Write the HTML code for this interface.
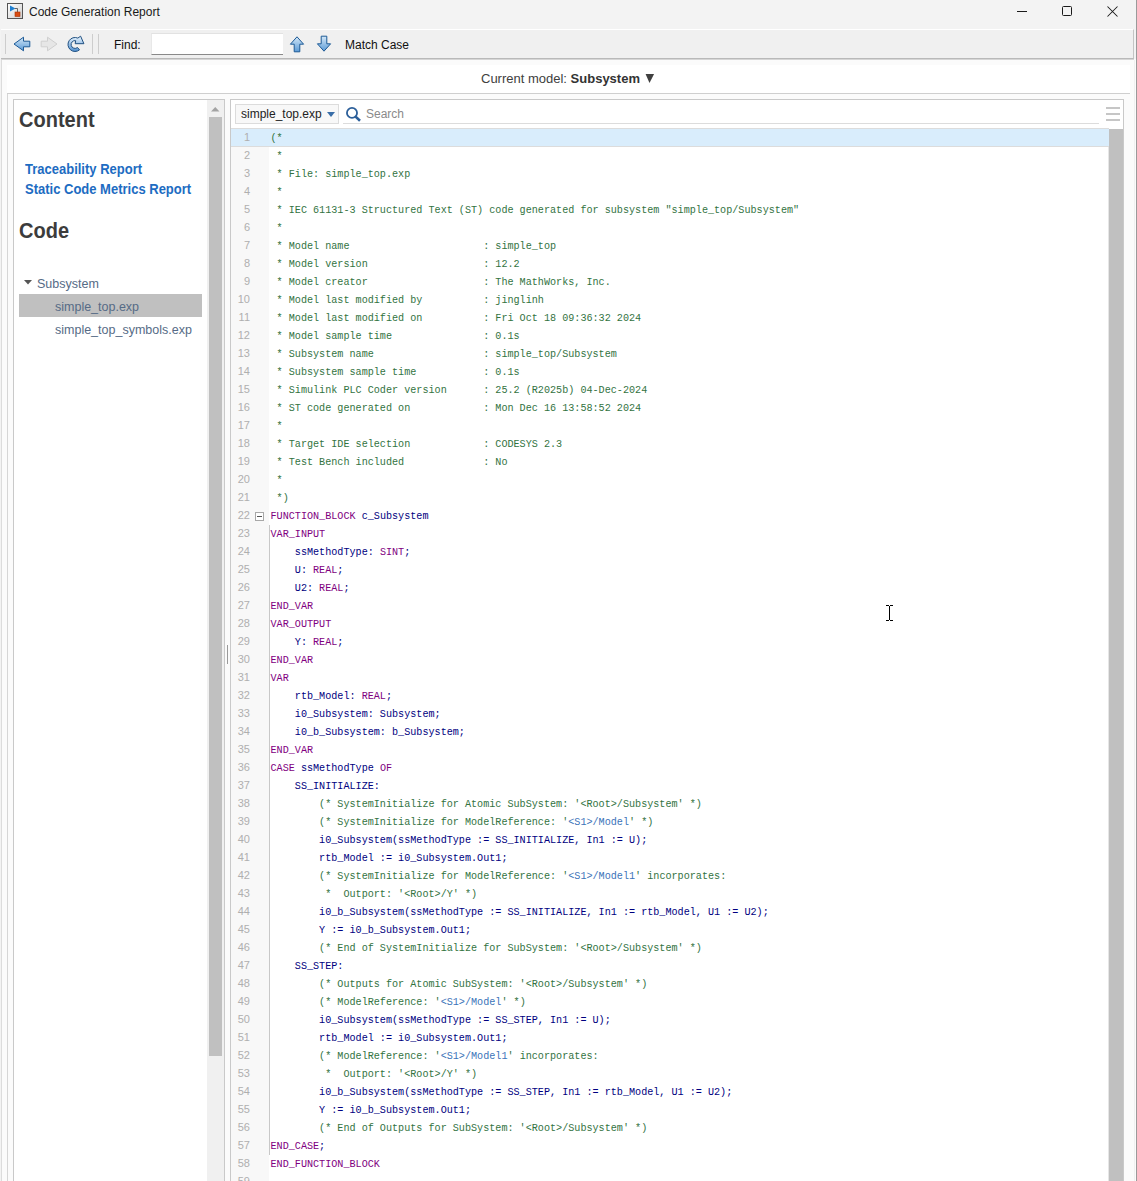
<!DOCTYPE html>
<html><head><meta charset="utf-8">
<style>
*{margin:0;padding:0;box-sizing:border-box}
html,body{width:1137px;height:1181px;overflow:hidden;background:#f3f3f3;font-family:"Liberation Sans",sans-serif}
.a{position:absolute}
svg{position:absolute;overflow:visible}
.t{position:absolute;white-space:pre;line-height:16px;height:16px}
#tb{left:1px;top:29px;width:1133px;height:30px;background:#f0f0f0;border-top:1px solid #fff;border-bottom:1px solid #b9b9b9;border-right:1px solid #c4c4c4}
#main{left:1px;top:59px;width:1135px;height:1122px;background:#fbfbfb;border-left:1px solid #dcdcdc}
#hdr{left:7px;top:65px;width:1123px;height:29px;background:#fff;border-bottom:1px solid #cfcfcf}
#lp{left:13px;top:99px;width:212px;height:1100px;background:#fff;border:1px solid #c9c9c9}
#rp{left:230px;top:99px;width:894px;height:1100px;background:#fff;border:1px solid #c9c9c9}
.ln{position:absolute;left:231px;width:877px;height:18px}
.no{position:absolute;left:0;width:19px;text-align:right;font-family:"Liberation Sans",sans-serif;font-size:11px;line-height:18px;color:#afafaf}
.tx{position:absolute;left:39.5px;top:2px;font-family:"Liberation Mono",monospace;font-size:10.15px;line-height:18px;white-space:pre;color:#000080}
i{font-style:normal}
i.c{color:#33733f}
i.l{color:#3b73b9}
i.k{color:#800080}
</style></head><body>
<!-- title bar -->
<svg style="left:7px;top:3px" width="17" height="17" viewBox="0 0 17 17">
<defs><linearGradient id="gi" x1="0" y1="0" x2="1" y2="1"><stop offset="0" stop-color="#fff"/><stop offset="1" stop-color="#cfcfcf"/></linearGradient></defs>
<rect x="0.5" y="0.5" width="15" height="15" fill="url(#gi)" stroke="#555"/>
<path d="M3 2.5L8.5 5.5L3 8.5Z" fill="#1f7fd0"/>
<path d="M8 5.5H10.5V9" fill="none" stroke="#444" stroke-width="0.8"/>
<rect x="8" y="9" width="5" height="4.5" fill="#d84a10" stroke="#a83000" stroke-width="0.6"/>
</svg>
<div class="t" style="left:29px;top:4px;font-size:12px;color:#1a1a1a">Code Generation Report</div>
<div class="a" style="left:1017px;top:11px;width:10px;height:1px;background:#1a1a1a"></div>
<div class="a" style="left:1062px;top:6px;width:10px;height:10px;border:1px solid #1a1a1a;border-radius:1.5px"></div>
<svg style="left:1107px;top:6px" width="11" height="11"><path d="M0.5 0.5L10.5 10.5M10.5 0.5L0.5 10.5" stroke="#1a1a1a" stroke-width="1.05"/></svg>
<div class="a" style="left:1136px;top:0;width:1px;height:1181px;background:#9a9a9a"></div>

<!-- toolbar -->
<div class="a" id="tb"></div>
<div class="a" style="left:5px;top:34px;width:1px;height:20px;background:#cdcdcd"></div>
<svg style="left:13px;top:36px" width="18" height="16" viewBox="0 0 18 16">
<defs><linearGradient id="gb" x1="0" y1="0" x2="0" y2="1"><stop offset="0" stop-color="#d4e8f8"/><stop offset="1" stop-color="#5a9ad6"/></linearGradient></defs>
<path d="M1 8L10.5 1.2V5.2H16.8V10.8H10.5V14.8Z" fill="url(#gb)" stroke="#1d5a96" stroke-width="1" stroke-linejoin="round"/>
</svg>
<svg style="left:40px;top:36px" width="18" height="16" viewBox="0 0 18 16">
<path d="M17 8L7.5 1.2V5.2H1.2V10.8H7.5V14.8Z" fill="#e6e6e6" stroke="#cfcfcf" stroke-width="1" stroke-linejoin="round"/>
</svg>
<svg style="left:62px;top:32px" width="26" height="24" viewBox="0 0 26 24">
<defs><linearGradient id="gr" x1="0" y1="0" x2="0" y2="1"><stop offset="0" stop-color="#eef8ff"/><stop offset="1" stop-color="#4f8fd0"/></linearGradient></defs>
<path d="M15.85 6.1A7 7 0 1 0 17.5 17.86L15.5 15.49A3.9 3.9 0 1 1 13.68 8.66L13.2 11.7L21.9 11.7L18.6 4.2Z" fill="url(#gr)" stroke="#1f4f80" stroke-width="1" stroke-linejoin="round"/>
</svg>
<div class="a" style="left:92px;top:34px;width:1px;height:20px;background:#cdcdcd"></div>
<div class="a" style="left:98px;top:34px;width:1px;height:20px;background:#cdcdcd"></div>
<div class="t" style="left:114px;top:37px;font-size:12px;color:#111">Find:</div>
<div class="a" style="left:151px;top:33px;width:132px;height:22px;background:#fff;border-top:1px solid #e2e2e2;border-left:1px solid #e8e8e8;border-bottom:1px solid #8a8a8a"></div>
<svg style="left:289px;top:36px" width="16" height="17" viewBox="0 0 16 17">
<path d="M8 0.8L14.6 8.2H10.8V15.8H5.2V8.2H1.4Z" fill="url(#gb)" stroke="#1d5a96" stroke-width="1" stroke-linejoin="round"/>
</svg>
<svg style="left:316px;top:35px" width="16" height="17" viewBox="0 0 16 17">
<path d="M8 16.2L14.6 8.8H10.8V1.2H5.2V8.8H1.4Z" fill="url(#gb)" stroke="#1d5a96" stroke-width="1" stroke-linejoin="round"/>
</svg>
<div class="t" style="left:345px;top:37px;font-size:12px;color:#111">Match Case</div>

<!-- main -->
<div class="a" id="main"></div>
<div class="a" style="left:1px;top:59px;width:1133px;height:1px;background:#d6d6d6"></div>
<div class="a" id="hdr"></div>
<div class="t" style="left:481px;top:71px;font-size:13px;color:#404040">Current model: <b style="color:#333">Subsystem</b></div>
<svg style="left:645px;top:73px" width="10" height="10"><path d="M0.6 0.9H9.1L4.5 9.9Z" fill="#404040"/></svg>
<div class="a" style="left:7px;top:94px;width:1px;height:1100px;background:#d6d6d6"></div>

<!-- left panel -->
<div class="a" id="lp"></div>
<div class="t" style="left:19px;top:109px;font-size:20px;line-height:22px;height:22px;font-weight:bold;color:#3c3c3c;transform:scaleY(1.08);transform-origin:0 18px">Content</div>
<div class="t" style="left:25px;top:162px;font-size:13px;font-weight:bold;color:#1d6cc2;transform:scaleY(1.06);transform-origin:0 12px">Traceability Report</div>
<div class="t" style="left:25px;top:182px;font-size:13px;font-weight:bold;color:#1d6cc2;transform:scaleY(1.06);transform-origin:0 12px">Static Code Metrics Report</div>
<div class="t" style="left:19px;top:220px;font-size:20px;line-height:22px;height:22px;font-weight:bold;color:#3c3c3c;transform:scaleY(1.07);transform-origin:0 18px">Code</div>
<svg style="left:24px;top:280px" width="9" height="5"><path d="M0 0H8L4 4.5Z" fill="#555"/></svg>
<div class="t" style="left:37px;top:276px;font-size:12.5px;color:#566b86">Subsystem</div>
<div class="a" style="left:19px;top:294px;width:183px;height:23px;background:#c0c0c0"></div>
<div class="t" style="left:55px;top:299px;font-size:12.5px;color:#566b86">simple_top.exp</div>
<div class="t" style="left:55px;top:322px;font-size:12.5px;color:#566b86">simple_top_symbols.exp</div>
<div class="a" style="left:207px;top:100px;width:17px;height:1100px;background:#f0f0f0"></div>
<svg style="left:211px;top:107px" width="9" height="5"><path d="M0 4.5H8.5L4.25 0Z" fill="#a3a3a3"/></svg>
<div class="a" style="left:209px;top:117px;width:13px;height:939px;background:#c0c0c0"></div>
<div class="a" style="left:227px;top:645px;width:1px;height:19px;background:#9a9a9a"></div>

<!-- right panel -->
<div class="a" id="rp"></div>
<div class="a" style="left:235px;top:104px;width:104px;height:20px;background:#f8f8f8;border:1px solid #dcdcdc"></div>
<div class="t" style="left:241px;top:106px;font-size:12px;color:#222">simple_top.exp</div>
<svg style="left:327px;top:112px" width="9" height="6"><path d="M0 0H8L4 5Z" fill="#3a6ea8"/></svg>
<svg style="left:345px;top:108px" width="17" height="15" viewBox="0 0 17 15">
<circle cx="7" cy="4.9" r="5.05" fill="none" stroke="#2c5f9a" stroke-width="1.8"/>
<path d="M10.6 8.6L15 12.8" stroke="#2c5f9a" stroke-width="2.6"/>
</svg>
<div class="t" style="left:366px;top:106px;font-size:12px;color:#8a8a8a">Search</div>
<div class="a" style="left:343px;top:123px;width:756px;height:1px;background:#dcdcdc"></div>
<div class="a" style="left:1106px;top:107px;width:14px;height:2px;background:#c6c6c6"></div>
<div class="a" style="left:1106px;top:113px;width:14px;height:2px;background:#c6c6c6"></div>
<div class="a" style="left:1106px;top:119px;width:14px;height:2px;background:#c6c6c6"></div>

<!-- code -->
<div class="a" style="left:231px;top:128px;width:38px;height:1053px;background:#f8f8f8"></div>
<div class="a" style="left:231px;top:128px;width:878px;height:19px;background:#d9edfc;border-top:1px solid #dcdcdc;border-bottom:1px solid #dcdcdc"></div>
<div class="a" style="left:269px;top:525px;width:1px;height:630px;background:#c8c8c8"></div>
<div class="a" style="left:255px;top:512px;width:9px;height:9px;border:1px solid #a8a8a8;background:#fff"></div>
<div class="a" style="left:257px;top:516px;width:5px;height:1px;background:#555"></div>
<div class="ln" style="top:128px"><span class="no">1</span><span class="tx"><i class="c">(*</i></span></div><div class="ln" style="top:146px"><span class="no">2</span><span class="tx"><i class="c"> *</i></span></div><div class="ln" style="top:164px"><span class="no">3</span><span class="tx"><i class="c"> * File: simple_top.exp</i></span></div><div class="ln" style="top:182px"><span class="no">4</span><span class="tx"><i class="c"> *</i></span></div><div class="ln" style="top:200px"><span class="no">5</span><span class="tx"><i class="c"> * IEC 61131-3 Structured Text (ST) code generated for subsystem "simple_top/Subsystem"</i></span></div><div class="ln" style="top:218px"><span class="no">6</span><span class="tx"><i class="c"> *</i></span></div><div class="ln" style="top:236px"><span class="no">7</span><span class="tx"><i class="c"> * Model name                      : simple_top</i></span></div><div class="ln" style="top:254px"><span class="no">8</span><span class="tx"><i class="c"> * Model version                   : 12.2</i></span></div><div class="ln" style="top:272px"><span class="no">9</span><span class="tx"><i class="c"> * Model creator                   : The MathWorks, Inc.</i></span></div><div class="ln" style="top:290px"><span class="no">10</span><span class="tx"><i class="c"> * Model last modified by          : jinglinh</i></span></div><div class="ln" style="top:308px"><span class="no">11</span><span class="tx"><i class="c"> * Model last modified on          : Fri Oct 18 09:36:32 2024</i></span></div><div class="ln" style="top:326px"><span class="no">12</span><span class="tx"><i class="c"> * Model sample time               : 0.1s</i></span></div><div class="ln" style="top:344px"><span class="no">13</span><span class="tx"><i class="c"> * Subsystem name                  : simple_top/Subsystem</i></span></div><div class="ln" style="top:362px"><span class="no">14</span><span class="tx"><i class="c"> * Subsystem sample time           : 0.1s</i></span></div><div class="ln" style="top:380px"><span class="no">15</span><span class="tx"><i class="c"> * Simulink PLC Coder version      : 25.2 (R2025b) 04-Dec-2024</i></span></div><div class="ln" style="top:398px"><span class="no">16</span><span class="tx"><i class="c"> * ST code generated on            : Mon Dec 16 13:58:52 2024</i></span></div><div class="ln" style="top:416px"><span class="no">17</span><span class="tx"><i class="c"> *</i></span></div><div class="ln" style="top:434px"><span class="no">18</span><span class="tx"><i class="c"> * Target IDE selection            : CODESYS 2.3</i></span></div><div class="ln" style="top:452px"><span class="no">19</span><span class="tx"><i class="c"> * Test Bench included             : No</i></span></div><div class="ln" style="top:470px"><span class="no">20</span><span class="tx"><i class="c"> *</i></span></div><div class="ln" style="top:488px"><span class="no">21</span><span class="tx"><i class="c"> *)</i></span></div><div class="ln" style="top:506px"><span class="no">22</span><span class="tx"><i class="k">FUNCTION_BLOCK</i> c_Subsystem</span></div><div class="ln" style="top:524px"><span class="no">23</span><span class="tx"><i class="k">VAR_INPUT</i></span></div><div class="ln" style="top:542px"><span class="no">24</span><span class="tx">    ssMethodType: <i class="k">SINT</i>;</span></div><div class="ln" style="top:560px"><span class="no">25</span><span class="tx">    U: <i class="k">REAL</i>;</span></div><div class="ln" style="top:578px"><span class="no">26</span><span class="tx">    U2: <i class="k">REAL</i>;</span></div><div class="ln" style="top:596px"><span class="no">27</span><span class="tx"><i class="k">END_VAR</i></span></div><div class="ln" style="top:614px"><span class="no">28</span><span class="tx"><i class="k">VAR_OUTPUT</i></span></div><div class="ln" style="top:632px"><span class="no">29</span><span class="tx">    Y: <i class="k">REAL</i>;</span></div><div class="ln" style="top:650px"><span class="no">30</span><span class="tx"><i class="k">END_VAR</i></span></div><div class="ln" style="top:668px"><span class="no">31</span><span class="tx"><i class="k">VAR</i></span></div><div class="ln" style="top:686px"><span class="no">32</span><span class="tx">    rtb_Model: <i class="k">REAL</i>;</span></div><div class="ln" style="top:704px"><span class="no">33</span><span class="tx">    i0_Subsystem: Subsystem;</span></div><div class="ln" style="top:722px"><span class="no">34</span><span class="tx">    i0_b_Subsystem: b_Subsystem;</span></div><div class="ln" style="top:740px"><span class="no">35</span><span class="tx"><i class="k">END_VAR</i></span></div><div class="ln" style="top:758px"><span class="no">36</span><span class="tx"><i class="k">CASE</i> ssMethodType <i class="k">OF</i></span></div><div class="ln" style="top:776px"><span class="no">37</span><span class="tx">    SS_INITIALIZE:</span></div><div class="ln" style="top:794px"><span class="no">38</span><span class="tx">        <i class="c">(* SystemInitialize for Atomic SubSystem: '&lt;Root&gt;/Subsystem' *)</i></span></div><div class="ln" style="top:812px"><span class="no">39</span><span class="tx">        <i class="c">(* SystemInitialize for ModelReference: '<i class="l">&lt;S1&gt;/Model</i>' *)</i></span></div><div class="ln" style="top:830px"><span class="no">40</span><span class="tx">        i0_Subsystem(ssMethodType := SS_INITIALIZE, In1 := U);</span></div><div class="ln" style="top:848px"><span class="no">41</span><span class="tx">        rtb_Model := i0_Subsystem.Out1;</span></div><div class="ln" style="top:866px"><span class="no">42</span><span class="tx">        <i class="c">(* SystemInitialize for ModelReference: '<i class="l">&lt;S1&gt;/Model1</i>' incorporates:</i></span></div><div class="ln" style="top:884px"><span class="no">43</span><span class="tx"><i class="c">         *  Outport: '&lt;Root&gt;/Y' *)</i></span></div><div class="ln" style="top:902px"><span class="no">44</span><span class="tx">        i0_b_Subsystem(ssMethodType := SS_INITIALIZE, In1 := rtb_Model, U1 := U2);</span></div><div class="ln" style="top:920px"><span class="no">45</span><span class="tx">        Y := i0_b_Subsystem.Out1;</span></div><div class="ln" style="top:938px"><span class="no">46</span><span class="tx">        <i class="c">(* End of SystemInitialize for SubSystem: '&lt;Root&gt;/Subsystem' *)</i></span></div><div class="ln" style="top:956px"><span class="no">47</span><span class="tx">    SS_STEP:</span></div><div class="ln" style="top:974px"><span class="no">48</span><span class="tx">        <i class="c">(* Outputs for Atomic SubSystem: '&lt;Root&gt;/Subsystem' *)</i></span></div><div class="ln" style="top:992px"><span class="no">49</span><span class="tx">        <i class="c">(* ModelReference: '<i class="l">&lt;S1&gt;/Model</i>' *)</i></span></div><div class="ln" style="top:1010px"><span class="no">50</span><span class="tx">        i0_Subsystem(ssMethodType := SS_STEP, In1 := U);</span></div><div class="ln" style="top:1028px"><span class="no">51</span><span class="tx">        rtb_Model := i0_Subsystem.Out1;</span></div><div class="ln" style="top:1046px"><span class="no">52</span><span class="tx">        <i class="c">(* ModelReference: '<i class="l">&lt;S1&gt;/Model1</i>' incorporates:</i></span></div><div class="ln" style="top:1064px"><span class="no">53</span><span class="tx"><i class="c">         *  Outport: '&lt;Root&gt;/Y' *)</i></span></div><div class="ln" style="top:1082px"><span class="no">54</span><span class="tx">        i0_b_Subsystem(ssMethodType := SS_STEP, In1 := rtb_Model, U1 := U2);</span></div><div class="ln" style="top:1100px"><span class="no">55</span><span class="tx">        Y := i0_b_Subsystem.Out1;</span></div><div class="ln" style="top:1118px"><span class="no">56</span><span class="tx">        <i class="c">(* End of Outputs for SubSystem: '&lt;Root&gt;/Subsystem' *)</i></span></div><div class="ln" style="top:1136px"><span class="no">57</span><span class="tx"><i class="k">END_CASE</i>;</span></div><div class="ln" style="top:1154px"><span class="no">58</span><span class="tx"><i class="k">END_FUNCTION_BLOCK</i></span></div><div class="ln" style="top:1172px"><span class="no">59</span><span class="tx"></span></div>
<div class="a" style="left:1108px;top:147px;width:1px;height:1034px;background:#e6e6e6"></div>
<div class="a" style="left:1109px;top:129px;width:14px;height:1052px;background:#c0c0c0"></div>
<div class="a" style="left:1134px;top:60px;width:1px;height:1121px;background:#f0f0f0"></div>

<!-- cursor -->
<div class="a" style="left:886px;top:605px;width:3px;height:1px;background:#000"></div>
<div class="a" style="left:890px;top:605px;width:3px;height:1px;background:#000"></div>
<div class="a" style="left:889px;top:606px;width:1px;height:14px;background:#000"></div>
<div class="a" style="left:886px;top:620px;width:3px;height:1px;background:#000"></div>
<div class="a" style="left:890px;top:620px;width:3px;height:1px;background:#000"></div>
</body></html>
